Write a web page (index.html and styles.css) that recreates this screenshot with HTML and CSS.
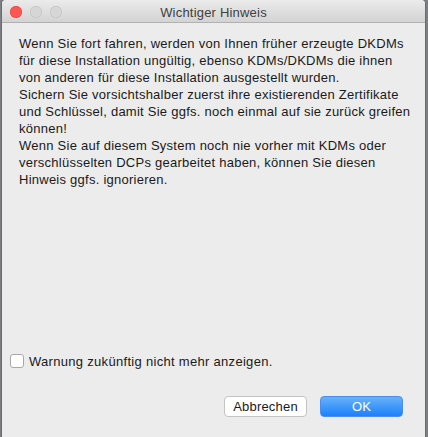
FILE: index.html
```html
<!DOCTYPE html>
<html lang="de">
<head>
<meta charset="utf-8">
<title>Wichtiger Hinweis</title>
<link rel="stylesheet" href="styles.css">
</head>
<body>
<div class="window">
  <div class="titlebar">
    <div class="lights">
      <span class="light red"></span>
      <span class="light"></span>
      <span class="light"></span>
    </div>
    <div class="title">Wichtiger Hinweis</div>
  </div>
  <div class="content">
    <p class="message">Wenn Sie fort fahren, werden von Ihnen früher erzeugte DKDMs<br>für diese Installation ungültig, ebenso KDMs/DKDMs die ihnen<br>von anderen für diese Installation ausgestellt wurden.<br>Sichern Sie vorsichtshalber zuerst ihre existierenden Zertifikate<br>und Schlüssel, damit Sie ggfs. noch einmal auf sie zurück greifen<br>können!<br>Wenn Sie auf diesem System noch nie vorher mit KDMs oder<br>verschlüsselten DCPs gearbeitet haben, können Sie diesen<br>Hinweis ggfs. ignorieren.</p>
    <label class="check"><span class="box"></span>Warnung zukünftig nicht mehr anzeigen.</label>
    <div class="buttons">
      <button class="btn">Abbrechen</button>
      <button class="btn primary">OK</button>
    </div>
  </div>
</div>
</body>
</html>
```
FILE: styles.css
```css
html, body {
  margin: 0;
  padding: 0;
  height: 100%;
}
body {
  background: #7d7f84;
  font-family: "Liberation Sans", Arial, sans-serif;
  font-size: 13px;
  color: #1a1a1a;
  overflow: hidden;
}
.window {
  margin-left: 2px;
  width: 423px;
  height: 437px;
  background: #ececec;
  display: flex;
  flex-direction: column;
  border-radius: 4px 4px 0 0;
  overflow: hidden;
  box-shadow: 0 0 0 1px rgba(0,0,0,0.15);
}
.titlebar {
  height: 22px;
  flex: none;
  background: linear-gradient(#ebebeb, #d3d3d3);
  border-bottom: 1px solid #b1b1b1;
  display: flex;
  align-items: center;
  position: relative;
}
.lights {
  display: flex;
  gap: 8px;
  padding-left: 8px;
  padding-top: 2px;
}
.light {
  width: 12px;
  height: 12px;
  border-radius: 50%;
  background: #d6d6d6;
  box-shadow: inset 0 0 0 0.5px #bdbdbd;
}
.light.red {
  background: #fc5753;
  box-shadow: inset 0 0 0 0.5px #df3f3b;
}
.title {
  position: absolute;
  left: 0;
  right: 0;
  top: 1px;
  line-height: 23px;
  text-align: center;
  color: #404040;
  font-size: 13px;
  letter-spacing: 0.2px;
}
.content {
  flex: 1;
  display: flex;
  flex-direction: column;
  padding: 0 16px 0 15px;
}
.message {
  margin: 12px 0 0 2px;
  line-height: 17px;
  font-size: 13px;
  letter-spacing: 0.25px;
  white-space: nowrap;
}
.check {
  margin-top: auto;
  display: flex;
  align-items: center;
  gap: 5px;
  margin-left: -7px;
  height: 16px;
  letter-spacing: 0.3px;
}
.box {
  width: 12px;
  height: 12px;
  border: 1px solid #a8a8a8;
  border-radius: 3px;
  background: #fff;
}
.buttons {
  display: flex;
  justify-content: flex-end;
  gap: 13px;
  margin-top: 27px;
  margin-bottom: 20px;
  margin-right: 6px;
}
.btn {
  font-family: inherit;
  font-size: 13px;
  height: 21px;
  width: 83px;
  border: 1px solid #c3c3c3;
  border-radius: 4px;
  background: #fff;
  color: #1a1a1a;
  padding: 0;
  letter-spacing: 0.2px;
}
.btn.primary {
  border-color: #4a8ff0;
  background: linear-gradient(#69b1fa, #1a82fb);
  color: #fff;
}
```
